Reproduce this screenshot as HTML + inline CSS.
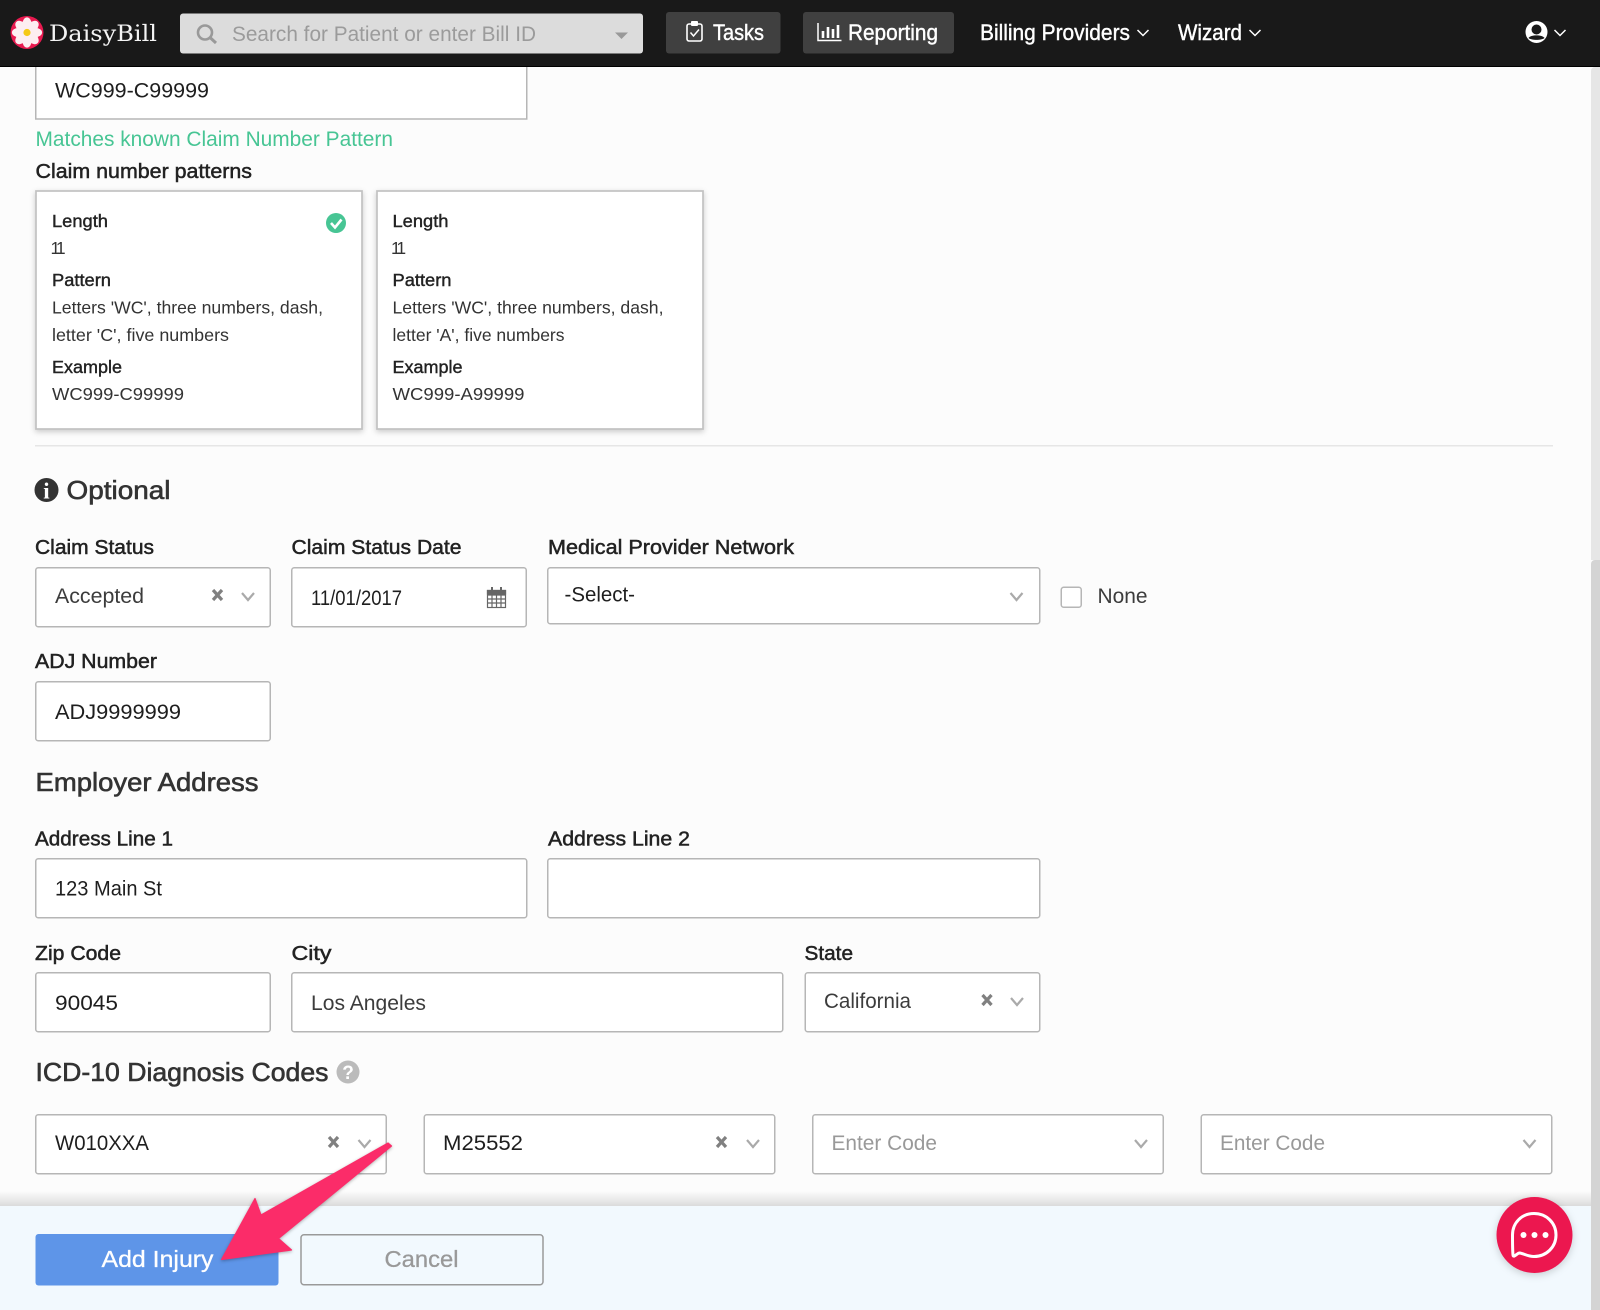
<!DOCTYPE html>
<html lang="en">
<head>
<meta charset="utf-8">
<title>DaisyBill - Add Injury</title>
<style>
html,body{margin:0;padding:0;background:#fcfcfc;width:1600px;height:1310px;overflow:hidden}
svg{display:block}
text{font-family:"Liberation Sans",Arial,sans-serif;white-space:pre}
.v{font-size:21px;fill:#1e1e1e}
.g{font-size:21px;fill:#3c3c3c}
.ph{font-size:21px;fill:#999}
.lb{font-size:20.5px;fill:#222;stroke:#222;stroke-width:.5}
.ch{font-size:26px;fill:#333;stroke:#333;stroke-width:.6}
.ct{font-size:17.5px;fill:#222;stroke:#222;stroke-width:.4}
.cv{font-size:17.5px;fill:#333}
.nav{font-size:22px;fill:#fff;stroke:#fff;stroke-width:.4}
.box{fill:#fff;stroke:#b6b6b6;stroke-width:1.5}
.card{fill:#fff;stroke:#c2c2c2;stroke-width:1.7;filter:drop-shadow(0 2px 3px rgba(0,0,0,.2))}
.chev{fill:none;stroke:#aaa;stroke-width:2.2}
.navchev{fill:none;stroke:#fff;stroke-width:1.5}
.x{stroke:#808080;stroke-width:3.2;fill:none}
</style>
</head>
<body>
<svg width="1600" height="1310" viewBox="0 0 1600 1310" xmlns="http://www.w3.org/2000/svg">
<defs>
<linearGradient id="fs" x1="0" y1="0" x2="0" y2="1"><stop offset="0" stop-color="#000" stop-opacity="0"/><stop offset="1" stop-color="#000" stop-opacity=".13"/></linearGradient>
</defs>
<rect width="1600" height="1310" fill="#fcfcfc"/>
<!-- form top -->
<rect class="box" x="35.75" y="50" width="491" height="69"/>
<text class="v" x="55" y="97.5" textLength="154" lengthAdjust="spacingAndGlyphs">WC999-C99999</text>
<text x="35.5" y="146" font-size="21" fill="#47c594" textLength="357.5" lengthAdjust="spacingAndGlyphs">Matches known Claim Number Pattern</text>
<text class="lb" x="35.5" y="178" textLength="216.5" lengthAdjust="spacingAndGlyphs">Claim number patterns</text>

<!-- cards -->
<rect class="card" x="36" y="191" width="326" height="238"/>
<rect class="card" x="377" y="191" width="326" height="238"/>
<text class="ct" x="52" y="227" textLength="56" lengthAdjust="spacingAndGlyphs">Length</text>
<text class="cv" x="50.5" y="254" letter-spacing="-3">11</text>
<text class="ct" x="52" y="286" textLength="59" lengthAdjust="spacingAndGlyphs">Pattern</text>
<text class="cv" x="52" y="313.5" textLength="271" lengthAdjust="spacingAndGlyphs">Letters 'WC', three numbers, dash,</text>
<text class="cv" x="52" y="341" textLength="177" lengthAdjust="spacingAndGlyphs">letter 'C', five numbers</text>
<text class="ct" x="52" y="373" textLength="70" lengthAdjust="spacingAndGlyphs">Example</text>
<text class="cv" x="52" y="400" textLength="132" lengthAdjust="spacingAndGlyphs">WC999-C99999</text>
<circle cx="336" cy="223" r="10" fill="#47c594"/>
<polyline points="331,223 335,227.5 341.5,219.5" fill="none" stroke="#fff" stroke-width="2.6"/>

<text class="ct" x="392.5" y="227" textLength="56" lengthAdjust="spacingAndGlyphs">Length</text>
<text class="cv" x="391" y="254" letter-spacing="-3">11</text>
<text class="ct" x="392.5" y="286" textLength="59" lengthAdjust="spacingAndGlyphs">Pattern</text>
<text class="cv" x="392.5" y="313.5" textLength="271" lengthAdjust="spacingAndGlyphs">Letters 'WC', three numbers, dash,</text>
<text class="cv" x="392.5" y="341" textLength="172" lengthAdjust="spacingAndGlyphs">letter 'A', five numbers</text>
<text class="ct" x="392.5" y="373" textLength="70" lengthAdjust="spacingAndGlyphs">Example</text>
<text class="cv" x="392.5" y="400" textLength="132" lengthAdjust="spacingAndGlyphs">WC999-A99999</text>

<rect x="35" y="445" width="1518" height="1.5" fill="#e6e6e6"/>

<!-- Optional -->
<circle cx="46.5" cy="490" r="12" fill="#333"/>
<text x="46.5" y="498.5" font-size="23" font-weight="bold" text-anchor="middle" fill="#fff" style="font-family:'Liberation Serif',serif">i</text>
<text class="ch" x="66.5" y="499" textLength="104" lengthAdjust="spacingAndGlyphs">Optional</text>

<text class="lb" x="35" y="554" textLength="119" lengthAdjust="spacingAndGlyphs">Claim Status</text>
<text class="lb" x="291.5" y="554" textLength="170" lengthAdjust="spacingAndGlyphs">Claim Status Date</text>
<text class="lb" x="548" y="554" textLength="246" lengthAdjust="spacingAndGlyphs">Medical Provider Network</text>

<rect class="box" x="35.75" y="567.75" width="234.5" height="59" rx="2.5"/>
<text class="g" x="55" y="603" textLength="89" lengthAdjust="spacingAndGlyphs">Accepted</text>
<path class="x" d="M213,590 L222,600 M222,590 L213,600"/>
<polyline class="chev" points="242,593 248,600 254,593"/>

<rect class="box" x="291.75" y="567.75" width="234.5" height="59" rx="2.5"/>
<text class="v" x="311" y="605" textLength="91" lengthAdjust="spacingAndGlyphs">11/01/2017</text>
<g fill="none" stroke="#666" stroke-width="1.2">
<rect x="487.5" y="590.5" width="18" height="17"/>
<path d="M487.5,595 H505.5 M487.5,599 H505.5 M487.5,603 H505.5 M492,595 V607.5 M496.5,595 V607.5 M501,595 V607.5"/>
<path d="M492,587 V592 M501,587 V592" stroke-width="2"/>
<rect x="487.5" y="590.5" width="18" height="3.5" fill="#666"/>
</g>

<rect class="box" x="547.75" y="567.75" width="492" height="56" rx="2.5"/>
<text class="v" x="564.5" y="601.5" textLength="70.5" lengthAdjust="spacingAndGlyphs">-Select-</text>
<polyline class="chev" points="1010.5,593 1016.5,600 1022.5,593"/>
<rect x="1061.25" y="587.25" width="20" height="20" rx="2.5" fill="#fff" stroke="#b6b6b6" stroke-width="1.5"/>
<text class="g" x="1097.5" y="603" textLength="50" lengthAdjust="spacingAndGlyphs">None</text>

<text class="lb" x="35" y="668" textLength="122" lengthAdjust="spacingAndGlyphs">ADJ Number</text>
<rect class="box" x="35.75" y="681.75" width="234.5" height="59" rx="2.5"/>
<text class="v" x="55" y="719" textLength="126" lengthAdjust="spacingAndGlyphs">ADJ9999999</text>

<text class="ch" x="35.5" y="791" textLength="223" lengthAdjust="spacingAndGlyphs">Employer Address</text>

<text class="lb" x="35" y="845.5" textLength="138" lengthAdjust="spacingAndGlyphs">Address Line 1</text>
<text class="lb" x="548" y="845.5" textLength="142" lengthAdjust="spacingAndGlyphs">Address Line 2</text>
<rect class="box" x="35.75" y="858.75" width="491" height="59" rx="2.5"/>
<text class="v" x="55" y="895.5" textLength="107" lengthAdjust="spacingAndGlyphs">123 Main St</text>
<rect class="box" x="547.75" y="858.75" width="492" height="59" rx="2.5"/>

<text class="lb" x="35" y="960" textLength="86" lengthAdjust="spacingAndGlyphs">Zip Code</text>
<text class="lb" x="291.5" y="960" textLength="40" lengthAdjust="spacingAndGlyphs">City</text>
<text class="lb" x="804.5" y="960" textLength="48.5" lengthAdjust="spacingAndGlyphs">State</text>
<rect class="box" x="35.75" y="972.75" width="234.5" height="59" rx="2.5"/>
<text class="v" x="55" y="1010" textLength="63" lengthAdjust="spacingAndGlyphs">90045</text>
<rect class="box" x="291.75" y="972.75" width="491" height="59" rx="2.5"/>
<text class="g" x="311" y="1010" textLength="115" lengthAdjust="spacingAndGlyphs">Los Angeles</text>
<rect class="box" x="805.25" y="972.75" width="234.5" height="59" rx="2.5"/>
<text class="g" x="824" y="1008" textLength="87" lengthAdjust="spacingAndGlyphs">California</text>
<path class="x" d="M982.5,995 L991.5,1005 M991.5,995 L982.5,1005"/>
<polyline class="chev" points="1011,998 1017,1005 1023,998"/>

<text class="ch" x="35.5" y="1081" textLength="293" lengthAdjust="spacingAndGlyphs">ICD-10 Diagnosis Codes</text>
<circle cx="348" cy="1072" r="11.5" fill="#bbb"/>
<text x="348" y="1079" font-size="19" font-weight="bold" text-anchor="middle" fill="#fff">?</text>

<rect class="box" x="35.75" y="1114.75" width="350.5" height="59" rx="2.5"/>
<text class="v" x="55" y="1150" textLength="94" lengthAdjust="spacingAndGlyphs">W010XXA</text>
<path class="x" d="M329,1137 L338,1147 M338,1137 L329,1147"/>
<polyline class="chev" points="358.5,1140 364.5,1147 370.5,1140"/>

<rect class="box" x="424.25" y="1114.75" width="350.5" height="59" rx="2.5"/>
<text class="v" x="443" y="1150" textLength="80" lengthAdjust="spacingAndGlyphs">M25552</text>
<path class="x" d="M717,1137 L726,1147 M726,1137 L717,1147"/>
<polyline class="chev" points="747,1140 753,1147 759,1140"/>

<rect class="box" x="812.75" y="1114.75" width="350.5" height="59" rx="2.5"/>
<text class="ph" x="831.5" y="1150" textLength="105.5" lengthAdjust="spacingAndGlyphs">Enter Code</text>
<polyline class="chev" points="1135,1140 1141,1147 1147,1140"/>

<rect class="box" x="1201.25" y="1114.75" width="350.5" height="59" rx="2.5"/>
<text class="ph" x="1220" y="1150" textLength="105" lengthAdjust="spacingAndGlyphs">Enter Code</text>
<polyline class="chev" points="1523.5,1140 1529.5,1147 1535.5,1140"/>

<!-- footer -->
<rect x="0" y="1191" width="1591" height="15" fill="url(#fs)"/>
<rect x="0" y="1206" width="1591" height="104" fill="#f2f9fe"/>
<rect x="35.5" y="1234" width="243" height="51.5" rx="3" fill="#5e95e8"/>
<text x="101.5" y="1267" font-size="23" fill="#fff" stroke="#fff" stroke-width=".3" textLength="112" lengthAdjust="spacingAndGlyphs">Add Injury</text>
<rect x="301" y="1234.75" width="242" height="50" rx="3" fill="#f2f9fe" stroke="#9a9a9a" stroke-width="1.5"/>
<text x="384.5" y="1267" font-size="23" fill="#999" stroke="#999" stroke-width=".3" textLength="74" lengthAdjust="spacingAndGlyphs">Cancel</text>

<!-- arrow -->
<polygon points="221.5,1259.5 255,1198.5 261,1215 388,1143 391.5,1146 278.5,1238.5 291.5,1250" fill="#fb2c69" stroke="#fb2c69" stroke-width="1.2" stroke-linejoin="round" style="filter:drop-shadow(0 1px 1.5px rgba(0,0,0,.3))"/>

<!-- chat -->
<circle cx="1534.5" cy="1235" r="38" fill="#ec174f" style="filter:drop-shadow(0 2px 4px rgba(0,0,0,.18))"/>
<path d="M1534,1213.5 C1546.5,1213.5 1556,1223 1556,1235 C1556,1247 1546.5,1256.5 1534,1256.5 C1527.5,1256.5 1524,1253.5 1519.5,1253 C1517,1253 1513.5,1258.5 1513,1255 C1512.5,1250 1512.5,1242 1512.5,1235 C1512.5,1223 1521.5,1213.5 1534,1213.5 Z" fill="none" stroke="#fff" stroke-width="3" stroke-linejoin="round"/>
<circle cx="1523.5" cy="1235" r="3" fill="#fff"/><circle cx="1534.5" cy="1235" r="3" fill="#fff"/><circle cx="1545.5" cy="1235" r="3" fill="#fff"/>

<!-- scrollbar -->
<path d="M1591,71 a4,4 0 0 1 4,-4 H1600 V560 H1591 Z" fill="#e6e6e6"/>
<path d="M1591,564 a4,4 0 0 1 4,-4 H1600 V1310 H1591 Z" fill="#d4d4d4"/>

<!-- header -->
<rect x="0" y="0" width="1600" height="66" fill="#191919"/>
<rect x="0" y="66" width="1600" height="1" fill="#000"/>
<circle cx="27" cy="32.5" r="16.5" fill="#e8194f"/>
<g fill="#fdeef1">
<ellipse cx="27" cy="24" rx="4.6" ry="6.6"/>
<ellipse cx="27" cy="24" rx="4.6" ry="6.6" transform="rotate(45 27 32.5)"/>
<ellipse cx="27" cy="24" rx="4.6" ry="6.6" transform="rotate(90 27 32.5)"/>
<ellipse cx="27" cy="24" rx="4.6" ry="6.6" transform="rotate(135 27 32.5)"/>
<ellipse cx="27" cy="24" rx="4.6" ry="6.6" transform="rotate(180 27 32.5)"/>
<ellipse cx="27" cy="24" rx="4.6" ry="6.6" transform="rotate(225 27 32.5)"/>
<ellipse cx="27" cy="24" rx="4.6" ry="6.6" transform="rotate(270 27 32.5)"/>
<ellipse cx="27" cy="24" rx="4.6" ry="6.6" transform="rotate(315 27 32.5)"/>
</g>
<circle cx="27" cy="32.5" r="3.6" fill="#f5c915"/>
<text x="49" y="41" font-size="22" fill="#f4f4f4" textLength="108" lengthAdjust="spacingAndGlyphs" style="font-family:'DejaVu Serif',serif">DaisyBill</text>

<rect x="180" y="13.5" width="463" height="40" rx="3" fill="#dcdcdc"/>
<circle cx="205" cy="32.5" r="7" fill="none" stroke="#999" stroke-width="2.6"/>
<line x1="210" y1="37.5" x2="216" y2="43" stroke="#999" stroke-width="3"/>
<text x="232" y="41" font-size="21" fill="#9b9b9b" textLength="304" lengthAdjust="spacingAndGlyphs">Search for Patient or enter Bill ID</text>
<polygon points="615,32.5 628,32.5 621.5,39" fill="#999"/>

<rect x="666" y="12" width="114.5" height="41.5" rx="3" fill="#404040"/>
<rect x="687" y="24" width="15" height="17" rx="2" fill="none" stroke="#fff" stroke-width="1.6"/>
<rect x="691" y="21" width="7" height="5" rx="1" fill="#fff"/>
<polyline points="690.5,32.5 693.5,36 699,29.5" fill="none" stroke="#fff" stroke-width="1.5"/>
<text class="nav" x="713" y="40" textLength="51" lengthAdjust="spacingAndGlyphs">Tasks</text>

<rect x="803" y="12" width="151" height="41.5" rx="3" fill="#404040"/>
<path d="M818,23 V40.5 H841.5" fill="none" stroke="#fff" stroke-width="1.5"/>
<path d="M823,31 V38 M828,27 V38 M833,29 V38 M838,25 V38" fill="none" stroke="#fff" stroke-width="2.6"/>
<text class="nav" x="848" y="40" textLength="90" lengthAdjust="spacingAndGlyphs">Reporting</text>

<text class="nav" x="980" y="40" textLength="150" lengthAdjust="spacingAndGlyphs">Billing Providers</text>
<polyline class="navchev" points="1137.5,30 1143,35.5 1148.5,30"/>
<text class="nav" x="1178" y="40" textLength="64" lengthAdjust="spacingAndGlyphs">Wizard</text>
<polyline class="navchev" points="1249.5,30 1255,35.5 1260.5,30"/>

<circle cx="1536.5" cy="32" r="11" fill="#fff"/>
<circle cx="1536.5" cy="29.5" r="5" fill="#191919"/>
<path d="M1528.5,38 C1530.5,34.5 1542.5,34.5 1544.5,38 C1541.5,40.5 1531.5,40.5 1528.5,38 Z" fill="#191919"/>
<polyline class="navchev" points="1554.5,30 1560,35.5 1565.5,30"/>
</svg>
</body>
</html>
